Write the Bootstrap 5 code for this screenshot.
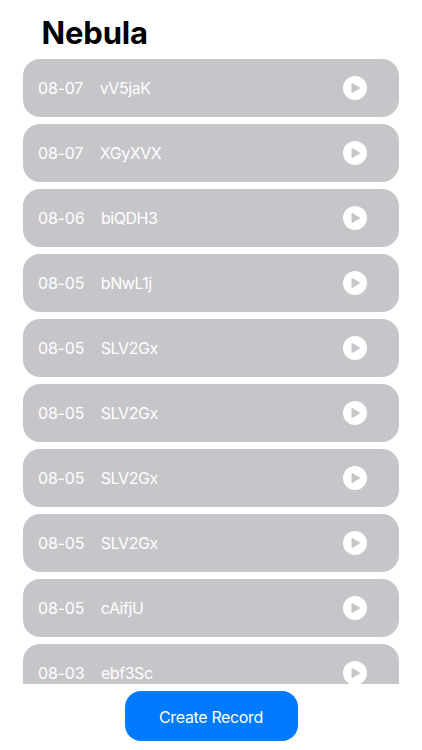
<!DOCTYPE html>
<html lang="en">
<head>
<meta charset="utf-8">
<meta name="viewport" content="width=device-width, initial-scale=1">
<title>Nebula</title>
<link rel="stylesheet" href="https://cdn.jsdelivr.net/npm/bootstrap@5.3.0/dist/css/bootstrap.min.css">
<style>
body { font-family: Inter, "Liberation Sans", sans-serif; }
.app-title { font-size: 31px; line-height: 38px; letter-spacing: -.15px; padding: 14px 0 7.4px 41.5px; }
.records { padding: 0 23px; gap: 7.7px; }
.record { height: 57.3px; border-radius: 17px; background: #c6c5ca; padding: 0 32.3px 0 15px; font-size: 16px; font-weight: 400; }
.record span { padding-top: .4px; }
.record-date { letter-spacing: -.2px; margin-right: 16.6px; }
.record-name { letter-spacing: -.45px; }
.play { width: 24px; height: 24px; }
.bottom-bar { height: 66px; padding: 7.3px 0 0; }
.create { width: 173px; height: 49.7px; border-radius: 16px; font-size: 16px; font-weight: 400; letter-spacing: -.35px; padding: 1px 0 0; --bs-btn-bg: #007aff; }
</style>
<script src="https://cdn.jsdelivr.net/npm/bootstrap@5.3.0/dist/js/bootstrap.bundle.min.js"></script>
</head>
<body class="bg-white vh-100 overflow-hidden d-flex flex-column">
<svg class="d-none"><symbol id="play" viewBox="0 0 24 24"><circle cx="12" cy="12" r="12" fill="#fff"/><path d="M9 7.4v9.2l7.7-4.6z" fill="#c6c5ca" stroke="#c6c5ca" stroke-width="1" stroke-linejoin="round"/></symbol></svg>
<h1 class="app-title fw-bold text-black m-0 flex-shrink-0">Nebula</h1>
<main class="records d-flex flex-column flex-grow-1 overflow-hidden">
<div class="record d-flex align-items-center flex-shrink-0 text-white"><span class="record-date">08-07</span><span class="record-name">vV5jaK</span><svg class="play ms-auto"><use href="#play"/></svg></div>
<div class="record d-flex align-items-center flex-shrink-0 text-white"><span class="record-date">08-07</span><span class="record-name">XGyXVX</span><svg class="play ms-auto"><use href="#play"/></svg></div>
<div class="record d-flex align-items-center flex-shrink-0 text-white"><span class="record-date">08-06</span><span class="record-name">biQDH3</span><svg class="play ms-auto"><use href="#play"/></svg></div>
<div class="record d-flex align-items-center flex-shrink-0 text-white"><span class="record-date">08-05</span><span class="record-name">bNwL1j</span><svg class="play ms-auto"><use href="#play"/></svg></div>
<div class="record d-flex align-items-center flex-shrink-0 text-white"><span class="record-date">08-05</span><span class="record-name">SLV2Gx</span><svg class="play ms-auto"><use href="#play"/></svg></div>
<div class="record d-flex align-items-center flex-shrink-0 text-white"><span class="record-date">08-05</span><span class="record-name">SLV2Gx</span><svg class="play ms-auto"><use href="#play"/></svg></div>
<div class="record d-flex align-items-center flex-shrink-0 text-white"><span class="record-date">08-05</span><span class="record-name">SLV2Gx</span><svg class="play ms-auto"><use href="#play"/></svg></div>
<div class="record d-flex align-items-center flex-shrink-0 text-white"><span class="record-date">08-05</span><span class="record-name">SLV2Gx</span><svg class="play ms-auto"><use href="#play"/></svg></div>
<div class="record d-flex align-items-center flex-shrink-0 text-white"><span class="record-date">08-05</span><span class="record-name">cAifjU</span><svg class="play ms-auto"><use href="#play"/></svg></div>
<div class="record d-flex align-items-center flex-shrink-0 text-white"><span class="record-date">08-03</span><span class="record-name">ebf3Sc</span><svg class="play ms-auto"><use href="#play"/></svg></div>
</main>
<footer class="bottom-bar flex-shrink-0 d-flex justify-content-center align-items-start">
<button type="button" class="create btn btn-primary border-0">Create Record</button>
</footer>
</body>
</html>
